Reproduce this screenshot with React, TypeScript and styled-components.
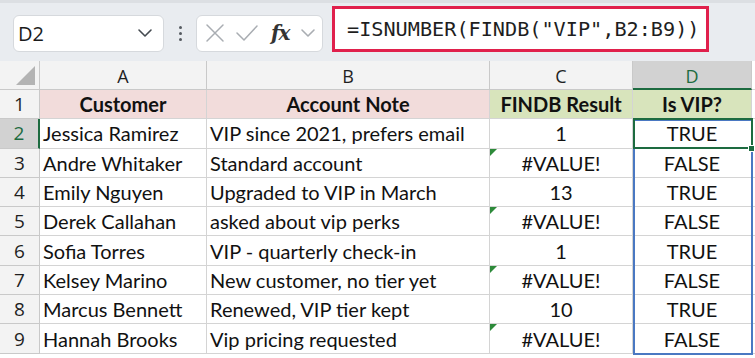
import { Fragment } from "react";
import { createGlobalStyle, styled } from "styled-components";

const GlobalStyle = createGlobalStyle`
  html, body {
    margin: 0;
    padding: 0;
    background: #ffffff;
    width: 755px;
    height: 358px;
    overflow: hidden;
  }
  * {
    box-sizing: border-box;
  }
`;

interface cellType {
  $align?: "left" | "center";
  $bold?: boolean;
  $bg?: string;
  $active?: boolean;
}

const Page = styled.div`
  width: 755px;
  height: 358px;
  display: flex;
  flex-direction: column;
  font-family: Lato, "Liberation Sans", sans-serif;
  background: #ffffff;
  overflow: hidden;
`;

const Toolbar = styled.div`
  height: 61px;
  flex-shrink: 0;
  display: flex;
  align-items: center;
  padding-left: 13px;
  background: #e9ecf0;
  border-top: 3px solid #dcdfe3;
`;

const NameBox = styled.div`
  width: 151px;
  height: 37px;
  display: flex;
  align-items: center;
  justify-content: space-between;
  padding: 0 10px 0 4px;
  background: #ffffff;
  border: 1px solid #d6d9dd;
  border-radius: 6px;
  font-family: "Open Sans", "Liberation Sans", sans-serif;
  font-size: 20px;
  color: #1b1b1b;
  margin-top: 2px;
`;

const Dots = styled.div`
  width: 32px;
  display: flex;
  flex-direction: column;
  align-items: center;
  gap: 3px;
  margin-top: 2px;

  span {
    width: 3px;
    height: 3px;
    border-radius: 50%;
    background: #555a60;
  }
`;

const FxBox = styled.div`
  width: 127px;
  height: 37px;
  display: flex;
  align-items: center;
  padding: 0 6px 0 8px;
  gap: 10px;
  background: #ffffff;
  border: 1px solid #d6d9dd;
  border-radius: 6px;
  margin-top: 2px;
`;

const FxText = styled.span`
  font-family: "DejaVu Serif", "Liberation Serif", serif;
  font-style: italic;
  font-weight: bold;
  font-size: 20px;
  color: #333333;
  margin-left: 2px;
  letter-spacing: -1px;
`;

const FormulaBox = styled.div`
  margin-left: 9px;
  width: 377px;
  height: 46px;
  display: flex;
  align-items: center;
  padding-left: 12px;
  background: #ffffff;
  border: 3px solid #e0204c;
  margin-top: -7px;
  font-family: "DejaVu Sans Mono", "Liberation Mono", monospace;
  font-size: 20.2px;
  color: #1e1e1e;
`;

const SheetWrap = styled.div`
  position: relative;
  flex: 1;
  background: #ffffff;
`;

const Sheet = styled.div`
  display: grid;
  grid-template-columns: 40px 167px 283px 143px 119px 3px;
  grid-template-rows: 29px repeat(9, 29.3px);
`;

const Corner = styled.div`
  position: relative;
  background: #f3f3f3;
  border-right: 1px solid #c9c9c9;
  border-bottom: 1px solid #c9c9c9;

  &::after {
    content: "";
    position: absolute;
    right: 4px;
    bottom: 4px;
    width: 0;
    height: 0;
    border-left: 19px solid transparent;
    border-bottom: 19px solid #b3b3b3;
  }
`;

const ColHead = styled.div<cellType>`
  display: flex;
  align-items: center;
  justify-content: center;
  background: ${(p) => (p.$active ? "#d2d2d2" : "#f3f3f3")};
  color: ${(p) => (p.$active ? "#1d6b40" : "#1f1f1f")};
  border-right: 1px solid #c9c9c9;
  border-bottom: ${(p) =>
    p.$active ? "2px solid #1d6b40" : "1px solid #c9c9c9"};
  font-family: "Open Sans", "Liberation Sans", sans-serif;
  font-size: 18px;
  padding-top: 2px;
`;

const RowHead = styled.div<cellType>`
  display: flex;
  align-items: center;
  justify-content: center;
  background: ${(p) => (p.$active ? "#d2d2d2" : "#f3f3f3")};
  color: ${(p) => (p.$active ? "#1d6b40" : "#1f1f1f")};
  border-right: ${(p) =>
    p.$active ? "2px solid #1d6b40" : "1px solid #c9c9c9"};
  border-bottom: 1px solid #c9c9c9;
  font-family: "Open Sans", "Liberation Sans", sans-serif;
  font-size: 19px;
`;

const Cell = styled.div<cellType>`
  position: relative;
  display: flex;
  align-items: center;
  justify-content: ${(p) => (p.$align === "center" ? "center" : "flex-start")};
  padding: 0 3px;
  background: ${(p) => p.$bg || "#ffffff"};
  border-right: 1px solid #d4d4d4;
  border-bottom: 1px solid #d4d4d4;
  font-size: 20px;
  font-weight: ${(p) => (p.$bold ? 700 : 400)};
  color: #111111;
  white-space: nowrap;
  overflow: hidden;
`;

const Filler = styled.div`
  background: #ffffff;
  border-bottom: 1px solid #d4d4d4;
`;

const ErrorFlag = styled.span`
  position: absolute;
  left: 0;
  top: 0;
  width: 0;
  height: 0;
  border-top: 7px solid #2d8a3a;
  border-right: 7px solid transparent;
`;

const RangeBox = styled.div`
  position: absolute;
  left: 633px;
  top: 58px;
  width: 120px;
  height: 236px;
  border: 2px solid #4a78c2;
  pointer-events: none;
`;

const ActiveBox = styled.div`
  position: absolute;
  left: 633px;
  top: 57px;
  width: 120px;
  height: 31px;
  border: 2px solid #1d6b40;
  pointer-events: none;
`;

const FillHandle = styled.div`
  position: absolute;
  left: 748px;
  top: 84px;
  width: 7px;
  height: 7px;
  background: #1d6b40;
  border: 1px solid #ffffff;
`;

const rows = [
  ["Jessica Ramirez", "VIP since 2021, prefers email", "1", "TRUE"],
  ["Andre Whitaker", "Standard account", "#VALUE!", "FALSE"],
  ["Emily Nguyen", "Upgraded to VIP in March", "13", "TRUE"],
  ["Derek Callahan", "asked about vip perks", "#VALUE!", "FALSE"],
  ["Sofia Torres", "VIP - quarterly check-in", "1", "TRUE"],
  ["Kelsey Marino", "New customer, no tier yet", "#VALUE!", "FALSE"],
  ["Marcus Bennett", "Renewed, VIP tier kept", "10", "TRUE"],
  ["Hannah Brooks", "Vip pricing requested", "#VALUE!", "FALSE"],
];

const Chevron = ({ color }: { color: string }) => (
  <svg width="16" height="10" viewBox="0 0 16 10" fill="none">
    <path d="M2 2l6 6 6-6" stroke={color} strokeWidth="1.6" strokeLinecap="round" strokeLinejoin="round" />
  </svg>
);

const App = () => {
  return (
    <Page>
      <GlobalStyle />
      <Toolbar>
        <NameBox>
          D2
          <Chevron color="#444a50" />
        </NameBox>
        <Dots>
          <span />
          <span />
          <span />
        </Dots>
        <FxBox>
          <svg width="20" height="20" viewBox="0 0 20 20" fill="none">
            <path d="M2 2l16 16M18 2L2 18" stroke="#a9adb2" strokeWidth="1.5" strokeLinecap="round" />
          </svg>
          <svg width="24" height="20" viewBox="0 0 24 20" fill="none">
            <path d="M2 10l7 7L22 3" stroke="#a9adb2" strokeWidth="1.5" strokeLinecap="round" strokeLinejoin="round" />
          </svg>
          <FxText>fx</FxText>
          <Chevron color="#a9adb2" />
        </FxBox>
        <FormulaBox>=ISNUMBER(FINDB("VIP",B2:B9))</FormulaBox>
      </Toolbar>
      <SheetWrap>
        <Sheet>
          <Corner />
          <ColHead>A</ColHead>
          <ColHead>B</ColHead>
          <ColHead>C</ColHead>
          <ColHead $active>D</ColHead>
          <Filler />

          <RowHead>1</RowHead>
          <Cell $align="center" $bold $bg="#f2dcdb">Customer</Cell>
          <Cell $align="center" $bold $bg="#f2dcdb">Account Note</Cell>
          <Cell $align="center" $bold $bg="#d8e4bc">FINDB Result</Cell>
          <Cell $align="center" $bold $bg="#d8e4bc">Is VIP?</Cell>
          <Filler />

          {rows.map((r, i) => (
            <Fragment key={i}>
              <RowHead $active={i === 0}>{i + 2}</RowHead>
              <Cell>{r[0]}</Cell>
              <Cell>{r[1]}</Cell>
              <Cell $align="center">
                {r[2] === "#VALUE!" && <ErrorFlag />}
                {r[2]}
              </Cell>
              <Cell $align="center">{r[3]}</Cell>
              <Filler />
            </Fragment>
          ))}
        </Sheet>
        <RangeBox />
        <ActiveBox />
        <FillHandle />
      </SheetWrap>
    </Page>
  );
};

export default App;
